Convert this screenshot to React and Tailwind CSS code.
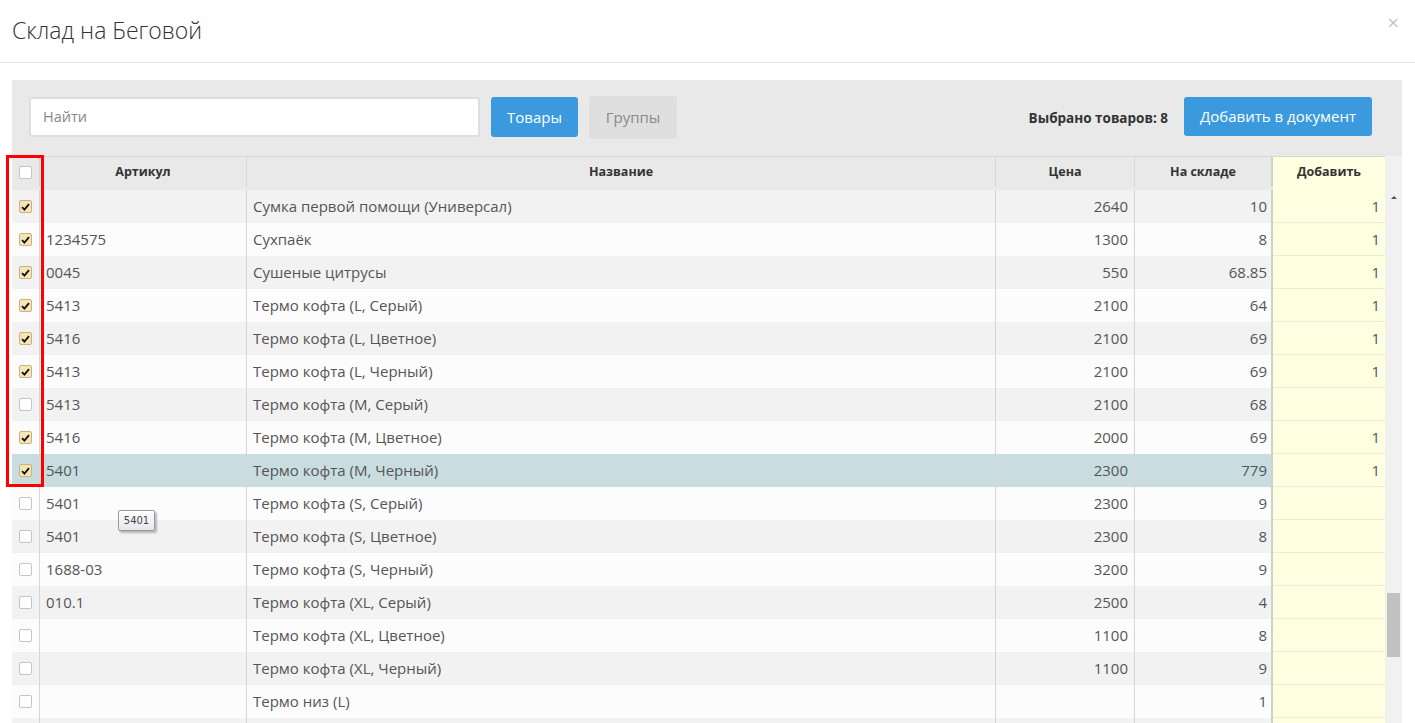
import { useState } from "react";

const rows = [
  { sku: "", name: "Сумка первой помощи (Универсал)", price: "2640", stock: "10", add: "1", checked: true },
  { sku: "1234575", name: "Сухпаёк", price: "1300", stock: "8", add: "1", checked: true },
  { sku: "0045", name: "Сушеные цитрусы", price: "550", stock: "68.85", add: "1", checked: true },
  { sku: "5413", name: "Термо кофта (L, Серый)", price: "2100", stock: "64", add: "1", checked: true },
  { sku: "5416", name: "Термо кофта (L, Цветное)", price: "2100", stock: "69", add: "1", checked: true },
  { sku: "5413", name: "Термо кофта (L, Черный)", price: "2100", stock: "69", add: "1", checked: true },
  { sku: "5413", name: "Термо кофта (M, Серый)", price: "2100", stock: "68", add: "", checked: false },
  { sku: "5416", name: "Термо кофта (M, Цветное)", price: "2000", stock: "69", add: "1", checked: true },
  { sku: "5401", name: "Термо кофта (M, Черный)", price: "2300", stock: "779", add: "1", checked: true, active: true },
  { sku: "5401", name: "Термо кофта (S, Серый)", price: "2300", stock: "9", add: "", checked: false },
  { sku: "5401", name: "Термо кофта (S, Цветное)", price: "2300", stock: "8", add: "", checked: false },
  { sku: "1688-03", name: "Термо кофта (S, Черный)", price: "3200", stock: "9", add: "", checked: false },
  { sku: "010.1", name: "Термо кофта (XL, Серый)", price: "2500", stock: "4", add: "", checked: false },
  { sku: "", name: "Термо кофта (XL, Цветное)", price: "1100", stock: "8", add: "", checked: false },
  { sku: "", name: "Термо кофта (XL, Черный)", price: "1100", stock: "9", add: "", checked: false },
  { sku: "", name: "Термо низ (L)", price: "", stock: "1", add: "", checked: false },
  { sku: "", name: "", price: "", stock: "", add: "", checked: false, empty: true },
];

const Checkbox = ({ checked }) => (
  <span
    className={
      checked
        ? "flex h-[13px] w-[13px] items-center justify-center rounded-[2px] border border-[#c9b27c] bg-[#f7e5b8]"
        : "flex h-[13px] w-[13px] items-center justify-center rounded-[2px] border border-[#c4c4c4] bg-white"
    }
  >
    {checked && (
      <svg width="9" height="8" viewBox="0 0 9 8">
        <path d="M1 4.2 L3.4 6.6 L8 1.2" fill="none" stroke="#111" strokeWidth="1.8" />
      </svg>
    )}
  </span>
);

const App = () => {
  const [items] = useState(rows);

  return (
    <div className="relative h-[723px] w-[1415px] overflow-hidden bg-white font-['Open_Sans',sans-serif] text-[#555]">
      {/* header */}
      <div className="flex h-[63px] items-center justify-between border-b border-[#e5e5e5] pl-[12px] pr-[16px]">
        <h1 className="mb-[2px] text-[23px] font-light text-[#333]">Склад на Беговой</h1>
        <span className="mb-[17px] text-[20px] leading-none text-[#c4c4c4]">×</span>
      </div>

      {/* panel */}
      <div className="mt-[17px] ml-[12px] w-[1390px] bg-[#e9e9e9]">
        {/* toolbar */}
        <div className="flex h-[76px] items-center pl-[17px] pr-[30px]">
          <div className="mb-[2px] flex h-[40px] w-[451px] items-center rounded-[3px] border-2 border-[#dedede] bg-white pl-[12px] text-[14.5px] text-[#888]">
            Найти
          </div>
          <button className="mb-[2px] ml-[11px] h-[40px] w-[87px] rounded-[3px] bg-[#3b9ade] text-[15px] text-white">
            Товары
          </button>
          <button className="mb-[1px] ml-[11px] h-[43px] w-[88px] rounded-[3px] bg-[#dfdfdf] text-[15px] text-[#8a8a8a]">
            Группы
          </button>
          <div className="ml-auto text-[13.5px] font-bold text-[#333]">Выбрано товаров: 8</div>
          <button className="ml-[16px] mb-[4px] h-[39px] w-[188px] rounded-[3px] bg-[#3b9ade] text-[15px] text-white">
            Добавить в документ
          </button>
        </div>

        {/* table */}
        <div className="flex">
          <div className="w-[1373px]">
            <div className="grid h-[34px] grid-cols-[28px_207px_749px_139px_138px_112px] border-t border-[#d6d6d6] pb-[3px] text-[12.5px] font-bold text-[#333]">
              <div className="flex items-center justify-center border-r border-[#d6d6d6]">
                <Checkbox checked={false} />
              </div>
              <div className="flex items-center justify-center border-r border-[#d6d6d6]">Артикул</div>
              <div className="flex items-center justify-center border-r border-[#d6d6d6]">Название</div>
              <div className="flex items-center justify-center border-r border-[#d6d6d6]">Цена</div>
              <div className="flex items-center justify-center border-r-2 border-[#d0d0d0]">На складе</div>
              <div className="-mb-[3px] flex items-center justify-center bg-[#fefee0] pb-[3px]">Добавить</div>
            </div>
            {items.map((r, i) => {
              const bg = r.active ? "bg-[#c9dde0]" : i % 2 === 0 ? "bg-[#f2f2f2]" : "bg-[#fcfcfc]";
              return (
                <div
                  key={i}
                  className={`grid h-[33px] grid-cols-[28px_207px_749px_139px_138px_112px] text-[15px] ${bg}`}
                >
                  <div className="flex items-center justify-center border-r border-[#d6d6d6]">
                    {!r.empty && <Checkbox checked={r.checked} />}
                  </div>
                  <div className="flex items-center border-r border-[#d6d6d6] pl-[6px]">{r.sku}</div>
                  <div className="flex items-center border-r border-[#d6d6d6] pl-[6px]">{r.name}</div>
                  <div className="flex items-center justify-end border-r border-[#d6d6d6] pr-[6px]">{r.price}</div>
                  <div className="flex items-center justify-end border-r-2 border-[#d0d0d0] pr-[4px]">{r.stock}</div>
                  <div className="flex items-center justify-end border-b border-[#ebebd6] bg-[#fefee0] pr-[5px]">
                    {r.add}
                  </div>
                </div>
              );
            })}
          </div>

          {/* scrollbar */}
          <div className="flex w-[17px] flex-col items-center bg-[#f1f1f1] pt-[34px]">
            <svg width="8" height="16" viewBox="0 0 8 16" className="mt-[2px]">
              <path d="M1 7 L4 4 L7 7 Z" fill="#555" />
            </svg>
            <div className="mt-[385px] h-[64px] w-[13px] bg-[#c1c1c1]" />
          </div>
        </div>
      </div>

      {/* selection highlight */}
      <div className="pointer-events-none absolute left-[6px] top-[155px] h-[332px] w-[38px] border-[3px] border-[#ff0000]" />

      {/* tooltip */}
      <div className="absolute left-[118px] top-[510px] flex h-[21px] w-[37px] items-center justify-center rounded-[2px] border border-[#9a9a9a] bg-gradient-to-b from-white to-[#e6e6ee] font-['DejaVu_Sans',sans-serif] text-[10px] text-[#444] shadow-[2px_2px_2px_rgba(0,0,0,0.25)]">
        5401
      </div>
    </div>
  );
};

export default App;
